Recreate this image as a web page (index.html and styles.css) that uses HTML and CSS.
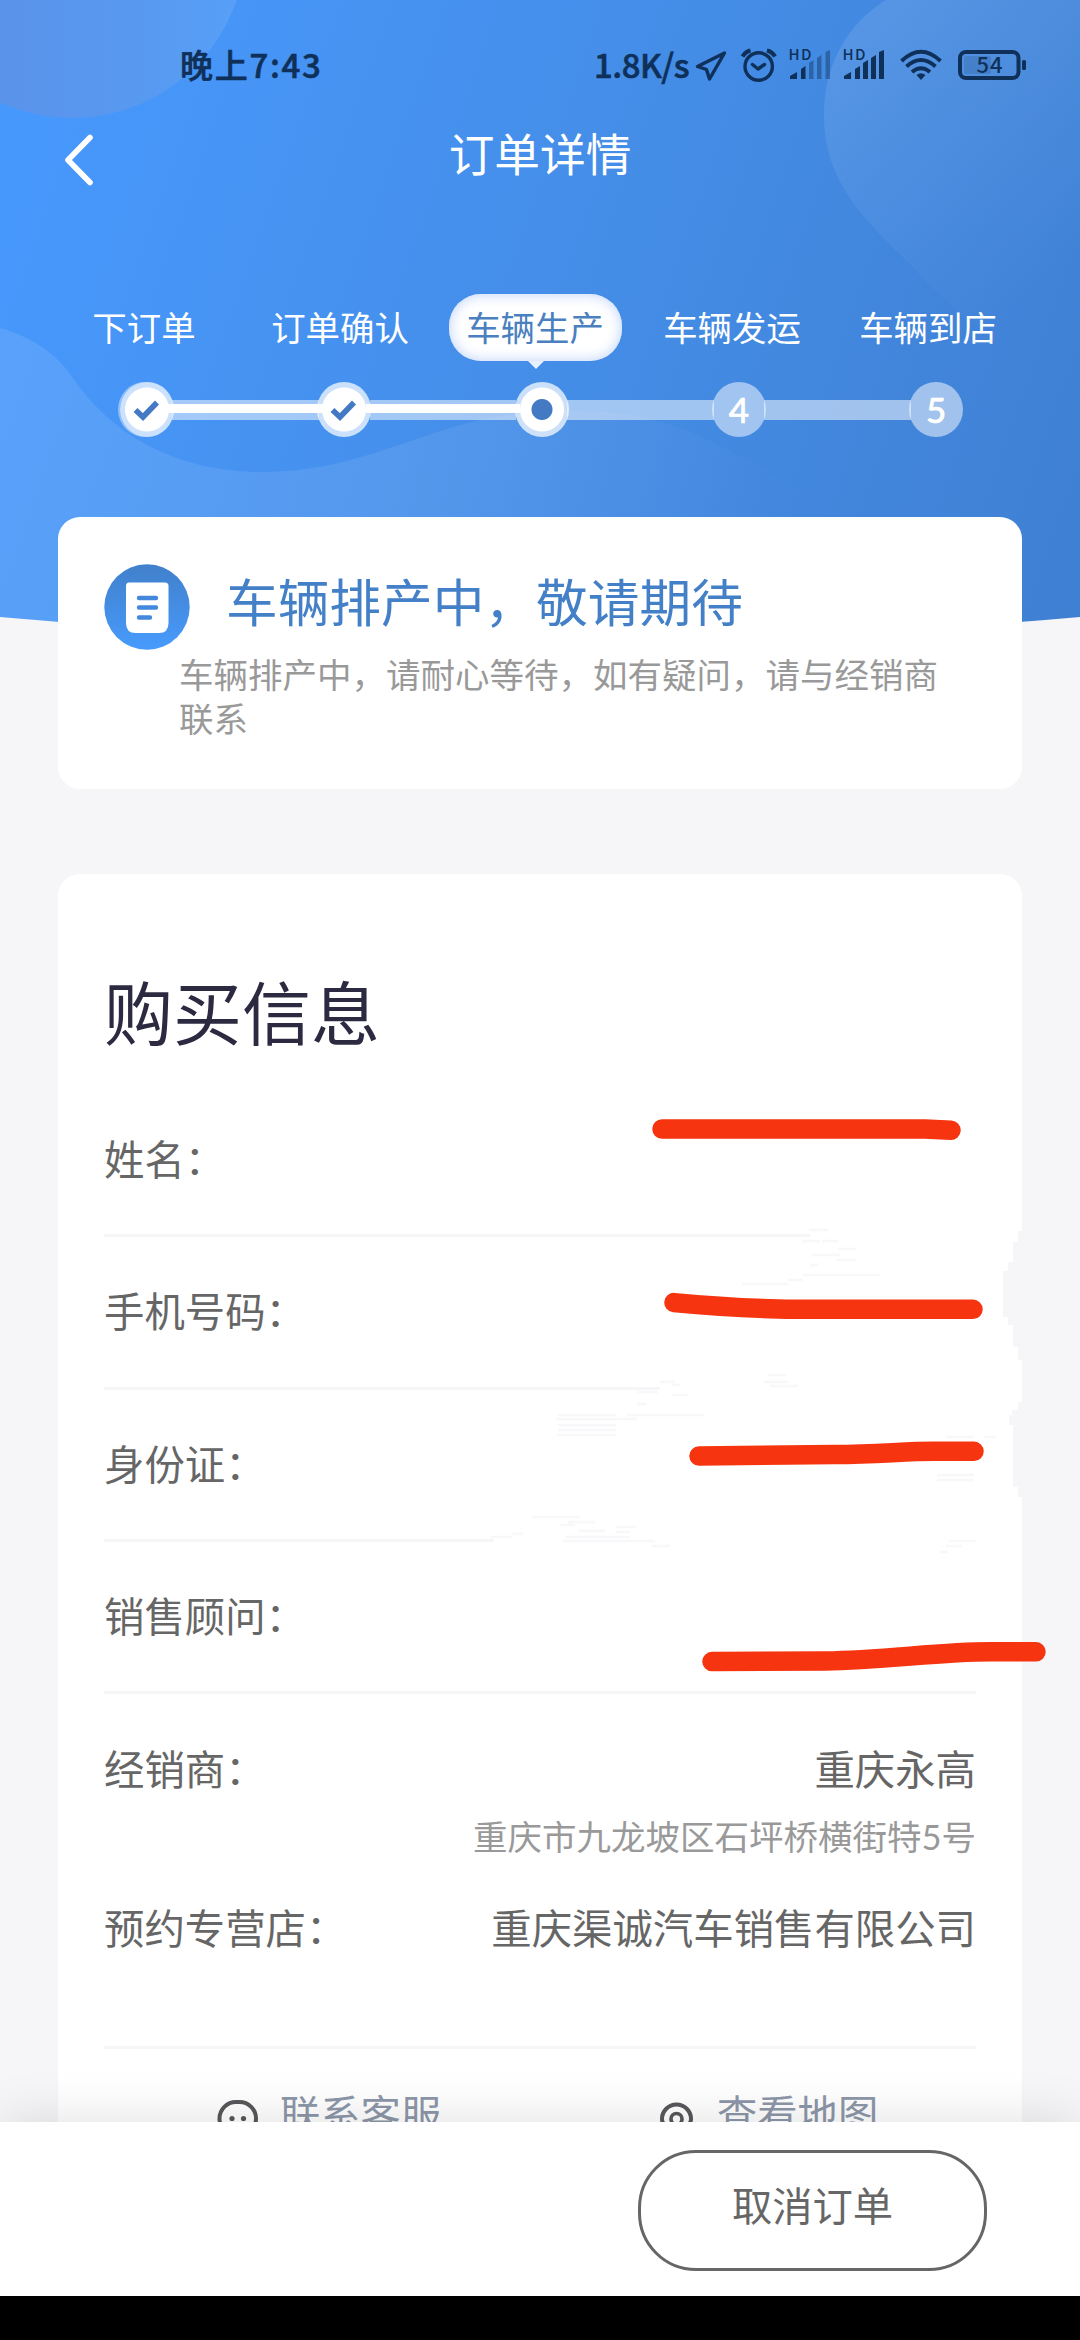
FILE: index.html
```html
<!DOCTYPE html>
<html lang="zh-CN">
<head>
<meta charset="utf-8">
<title>订单详情</title>
<link rel="stylesheet" href="styles.css">
</head>
<body>
<div class="page">
  <header class="hero">
    <svg class="hero-bg" viewBox="0 0 1080 650" width="1080" height="650">
      <defs>
        <linearGradient id="base" gradientUnits="userSpaceOnUse" x1="0" y1="180" x2="1080" y2="560">
          <stop offset="0" stop-color="#4798fd"/>
          <stop offset=".45" stop-color="#458fea"/>
          <stop offset="1" stop-color="#3f80d3"/>
        </linearGradient>
        <linearGradient id="orb" x1="0" x2="1" y1="0" y2="0">
          <stop offset=".25" stop-color="#5b92ea"/>
          <stop offset=".7" stop-color="#5899f0"/>
          <stop offset="1" stop-color="#57a0f8"/>
        </linearGradient>
        <linearGradient id="leaf" gradientUnits="userSpaceOnUse" x1="840" y1="60" x2="1030" y2="300">
          <stop offset="0" stop-color="#fff" stop-opacity=".1"/>
          <stop offset="1" stop-color="#fff" stop-opacity="0"/>
        </linearGradient>
        <linearGradient id="wave" gradientUnits="userSpaceOnUse" x1="0" y1="400" x2="800" y2="540">
          <stop offset="0" stop-color="#fff" stop-opacity=".1"/>
          <stop offset=".5" stop-color="#fff" stop-opacity=".08"/>
          <stop offset="1" stop-color="#fff" stop-opacity="0"/>
        </linearGradient>
      </defs>
      <path fill="url(#base)" d="M0 0H1080V617Q540 665 0 617Z"/>
      <circle cx="72" cy="-56" r="174" fill="url(#orb)"/>
      <path fill="url(#leaf)" d="M886 0C850 22 824 62 824 115C824 195 882 232 925 280C970 326 1010 350 1080 420V0Z"/>
      <path fill="url(#wave)" d="M0 328C30 336 56 354 70 374C112 438 180 472 262 472C350 472 410 436 480 420C560 404 640 408 700 436C790 478 860 530 960 628Q540 665 0 617Z"/>
    </svg>

    <div class="status">
      <span class="clock">晚上7:43</span>
      <div class="status-right">
        <span class="speed">1.8K/s</span>
        <svg class="status-icons" viewBox="690 40 340 50" width="340" height="50">
          <g fill="none" stroke="#0f3059" stroke-width="3.4" stroke-linejoin="round">
            <path d="M724.500 53L697.500 66.500L706.500 69.500L709.500 79Z"/>
            <circle cx="758.700" cy="66.500" r="13.700"/>
            <path d="M752.500 64.500L758 69L764.500 64.500" stroke-linecap="round"/>
            <path d="M742.500 56.500Q745.500 51.500 750.500 50.500M775 56.500Q772 51.500 767 50.500" stroke-width="4"/>
          </g>
          <g fill="#0f3059">
            <path d="M790 79V76L797 72V79ZM801 79V69L805.500 66V79Z"/>
            <path opacity=".42" d="M809 79V63L813.500 60V79ZM817 79V58L821.500 55V79ZM825.500 79V52L830 50V79Z"/>
            <path d="M844 79V76L851 72V79ZM855 79V69L860 66V79ZM863 79V63L868 60V79ZM871 79V58L876 55V79ZM879 79V52L884 50V79Z"/>
            <path d="M921 80L916.500 75Q921 71.500 925.500 75Z"/>
            <rect x="1022" y="60" width="4" height="10" rx="1.500"/>
            <rect x="964" y="56" width="27" height="18" rx="2" opacity=".15"/>
          </g>
          <g fill="none" stroke="#0f3059" stroke-width="4">
            <path d="M901.500 61Q921 42.500 940.500 61M906.500 66.500Q921 53.500 935.500 66.500M912 72Q921 64.500 930 72"/>
            <rect x="960" y="52" width="58.500" height="26" rx="6"/>
          </g>
          <g class="status-text">
            <text x="788.500" y="60" font-size="15" textLength="23">HD</text>
            <text x="842.500" y="60" font-size="15" textLength="23">HD</text>
            <text x="976.500" y="73" font-size="22" textLength="26">54</text>
          </g>
        </svg>
      </div>
    </div>

    <nav class="titlebar">
      <svg class="back" viewBox="0 0 34 56" width="34" height="56"><path d="M28 5.500L6 28L28 50.500" fill="none" stroke="#fff" stroke-width="5.600" stroke-linecap="round" stroke-linejoin="round"/></svg>
      <h1>订单详情</h1>
    </nav>

    <div class="step-labels">
      <span>下订单</span>
      <span>订单确认</span>
      <span class="current">车辆生产</span>
      <span>车辆发运</span>
      <span>车辆到店</span>
    </div>
    <div class="track">
      <i class="dot done first"><svg viewBox="0 0 30 24" width="30" height="24"><path d="M3.500 12L11 19L25 4.500" fill="none" stroke="#4479c4" stroke-width="5.600"/></svg></i>
      <i class="bar passed"></i>
      <i class="dot done"><svg viewBox="0 0 30 24" width="30" height="24"><path d="M3.500 12L11 19L25 4.500" fill="none" stroke="#4479c4" stroke-width="5.600"/></svg></i>
      <i class="bar passed"></i>
      <i class="dot done now"></i>
      <i class="bar"></i>
      <i class="dot">4</i>
      <i class="bar"></i>
      <i class="dot">5</i>
    </div>
  </header>

  <main class="content">
    <section class="card notice">
      <div class="notice-head">
        <svg class="notice-icon" viewBox="0 0 86 86" width="86" height="86">
          <defs><linearGradient id="ic" x1="0" y1="0" x2="0" y2="1"><stop offset="0" stop-color="#4180cb"/><stop offset="1" stop-color="#479bfd"/></linearGradient></defs>
          <circle cx="43" cy="43" r="42.700" fill="url(#ic)"/>
          <path fill="#fff" d="M25 18.500H61Q64.500 18.500 64.500 22V59Q64.500 69 55 69H31.500Q22 69 22 59V22Q22 18.500 25 18.500Z"/>
          <path d="M35 34H52M35 43.500H52M35 53.500H46" stroke="#4488de" stroke-width="4.400" stroke-linecap="round"/>
        </svg>
        <h2>车辆排产中，敬请期待</h2>
      </div>
      <p>车辆排产中，请耐心等待，如有疑问，请与经销商联系</p>
    </section>

    <section class="card info">
      <h3>购买信息</h3>
      <div class="row cut-a"><span>姓名：</span></div>
      <div class="row cut-b"><span>手机号码：</span></div>
      <div class="row cut-c"><span>身份证：</span></div>
      <div class="row"><span>销售顾问：</span></div>
      <div class="dealer">
        <div class="pair"><span>经销商：</span><span>重庆永高</span></div>
        <div class="address">重庆市九龙坡区石坪桥横街特5号</div>
        <div class="pair shop"><span>预约专营店：</span><span>重庆渠诚汽车销售有限公司</span></div>
      </div>
      <div class="actions">
        <a><svg viewBox="0 0 42 42" width="42" height="42"><rect x="3.500" y="4" width="36.500" height="33" rx="16.500" fill="none" stroke="#58585c" stroke-width="4"/><circle cx="16" cy="20.500" r="2.600" fill="#58585c"/><circle cx="27.500" cy="20.500" r="2.600" fill="#58585c"/></svg>联系客服</a>
        <a class="map"><svg viewBox="0 0 42 42" width="42" height="42"><path d="M21.500 40C13.500 33 7 27 7 21A14.500 14.500 0 0 1 36 21C36 27 29.500 33 21.500 40Z" fill="none" stroke="#58585c" stroke-width="4"/><circle cx="21.500" cy="21" r="5.500" fill="none" stroke="#58585c" stroke-width="3.600"/></svg>查看地图</a>
      </div>
    </section>
  </main>

  <footer class="bottom">
    <button>取消订单</button>
  </footer>
  <div class="gesture"></div>

  <svg class="marks" viewBox="0 0 1080 2340" width="1080" height="2340">
    <path fill="#f6f6f8" d="M1022 1231H1018V1242H1013V1262H1008V1271H1003V1317H1008V1325H1013V1347H1018V1360H1022ZM1022 1402H1018V1410H1012V1415H1009V1425H1013V1487H1018V1497H1022Z"/>
    <g stroke="#f8f8fa" stroke-width="2.500" fill="none">
      <path d="M809 1230H828M802 1241H820M822 1241H838M812 1255H840M838 1249H856M836 1260H856M810 1265H818M803 1275H880M788 1280H803M742 1284H788"/>
      <path d="M660 1382H675M672 1385H680M637 1392H658M672 1395H688M768 1375H786M764 1382H788M770 1386H798M637 1404H646M627 1415H704M556 1419H637M558 1415H616M558 1425H616M558 1430H616M558 1435H616"/>
      <path d="M490 1537H512M512 1534H523M532 1517H580M568 1522H595M560 1525H575M616 1527H636M578 1531H605M616 1532H630M565 1537H630M563 1541H655M652 1546H670M950 1541H976M946 1546H962M940 1552H948M946 1437H974M984 1437H996M937 1475H974M937 1480H974"/>
    </g>
    <g fill="none" stroke="#f6340f" stroke-width="19.500" stroke-linecap="round">
      <path d="M662 1129H925L951 1130.300"/>
      <path d="M674 1302.600Q745 1309.300 810 1309.300H973"/>
      <path d="M699 1456L835 1454.500C880 1454 905 1451.300 935 1451.300H974"/>
      <path d="M712 1661.600L825 1661C885 1660 940 1651.800 990 1651.800H1036"/>
    </g>
  </svg>
</div>
</body>
</html>
```
FILE: styles.css
```css
* { box-sizing: border-box; margin: 0; padding: 0; }

body {
  width: 1080px;
  height: 2340px;
  overflow: hidden;
  background: #f6f6f8;
  font-family: "Noto Sans CJK SC", sans-serif;
  color: #666;
}

.page {
  position: relative;
  display: flex;
  flex-direction: column;
  height: 2340px;
  overflow: hidden;
}

/* header */
.hero { position: relative; height: 517px; flex: none; color: #fff; }
.hero-bg { position: absolute; left: 0; top: 0; }
.hero > :not(.hero-bg) { position: relative; }

.status {
  display: flex;
  justify-content: space-between;
  height: 90px;
  padding: 40px 50px 0 180px;
  color: #0f3059;
  font-size: 33px;
  font-weight: 500;
  line-height: 48px;
  -webkit-text-stroke: .6px #0f3059;
}
.clock { letter-spacing: 1.700px; }
.status-right { display: flex; }
.speed { width: 96px; white-space: nowrap; letter-spacing: -.5px; }
.status-icons { display: block; }
.status-text {
  fill: #0f3059;
  font-family: "Noto Sans CJK SC", sans-serif;
  font-weight: 500;
  -webkit-text-stroke: .4px #0f3059;
}

.titlebar { display: flex; align-items: center; height: 140px; padding: 0 62px; }
.back { display: block; }
.titlebar h1 {
  flex: 1;
  margin-right: 34px;
  padding-bottom: 17px;
  text-align: center;
  font-size: 45.700px;
  font-weight: 400;
  line-height: 60px;
}

.step-labels {
  display: grid;
  grid-template-columns: repeat(5, 196px);
  justify-items: center;
  margin-top: 64px;
  padding-left: 46px;
  font-size: 34.450px;
  line-height: 65px;
}
.step-labels .current {
  position: relative;
  width: 173px;
  height: 67px;
  margin-right: 2px;
  text-align: center;
  color: #4a80c0;
  background: #fff;
  border-radius: 32px;
  box-shadow: inset 0 0 14px #bcd0fb;
}
.current::after {
  content: "";
  position: absolute;
  left: 79px;
  top: 67px;
  border: 8px solid transparent;
  border-top-color: #e8effd;
  border-bottom: 0;
}

.track { display: flex; align-items: center; height: 55px; margin: 21px 0 0 120px; }
.dot {
  display: flex;
  align-items: center;
  justify-content: center;
  width: 54px;
  height: 55px;
  border-radius: 50%;
  background: rgba(255, 255, 255, .5);
  font: 500 35px/55px Lato, "Noto Sans CJK SC", sans-serif;
  -webkit-text-stroke: .6px #fff;
}
.done { background: radial-gradient(circle, #fff 21.500px, rgba(255, 255, 255, .72) 22.500px); }
.first { box-shadow: -2px 0 0 rgba(255, 255, 255, .4); }
.now { background: radial-gradient(circle, #4479c4 10px, #fff 11px, #fff 21.500px, rgba(255, 255, 255, .72) 22.500px); }
.bar { position: relative; width: 146.500px; height: 20px; margin: 0 -1.600px; background: rgba(255, 255, 255, .5); }
.passed::before {
  content: "";
  position: absolute;
  inset: 4px -4px 7px;
  background: #fff;
}

/* cards */
.content { position: relative; flex: 1; min-height: 0; overflow: hidden; padding: 0 58px; }
.card { background: #fff; border-radius: 22px; }

.notice { height: 272px; padding: 47px 46px 0; }
.notice-head { display: flex; align-items: center; height: 86px; gap: 36px; }
.notice-head h2 {
  font-size: 51.700px;
  font-weight: 400;
  line-height: 74px;
  margin-top: -15px;
  color: #4480c8;
}
.notice p { width: 850px; padding-left: 75px; font-size: 34.500px; line-height: 44px; color: #999; margin-top: 1px; }

.info { height: 1400px; margin-top: 85px; padding: 86px 46px 0; }
.info h3 { font-size: 69px; font-weight: 400; line-height: 100px; color: #2c2a40; margin-bottom: 25px; }
.row {
  display: flex;
  align-items: center;
  height: 152.300px;
  padding-bottom: 7px;
  font-size: 40.400px;
  background: linear-gradient(#f6f6f8, #f6f6f8) left bottom / 100% 3px no-repeat;
}
.cut-a { background-size: 706px 3px; }
.cut-b { background-size: 556px 3px; }
.cut-c { background-size: 390px 3px; }

.dealer { height: 355px; padding-top: 44px; border-bottom: 3px solid #f6f6f8; font-size: 40.400px; line-height: 60px; }
.pair { display: flex; justify-content: space-between; }
.address { margin-top: 9px; text-align: right; font-family: Lato, "Noto Sans CJK SC", sans-serif; font-size: 34.500px; color: #999; }
.shop { margin-top: 30px; }

.actions { display: flex; padding: 33px 0 0 112px; font-size: 40.300px; line-height: 60px; color: #8d97a9; }
.actions a { display: flex; align-items: center; gap: 22px; width: 439px; }
.actions svg { display: block; margin-top: 14px; }
.actions .map { gap: 20px; width: auto; }

/* bottom bar */
.bottom {
  position: relative;
  display: flex;
  justify-content: flex-end;
  height: 174px;
  padding: 28px 93px 0;
  background: #fff;
  box-shadow: 0 0 50px rgba(0, 0, 0, .13);
}
.bottom button {
  width: 349px;
  height: 121px;
  padding-bottom: 14px;
  border: 3px solid #666;
  border-radius: 58px;
  background: none;
  color: #666;
  font: 400 40.300px/60px "Noto Sans CJK SC", sans-serif;
}
.gesture { position: relative; height: 44px; background: #000; }

.marks { position: absolute; left: 0; top: 0; pointer-events: none; }
```
